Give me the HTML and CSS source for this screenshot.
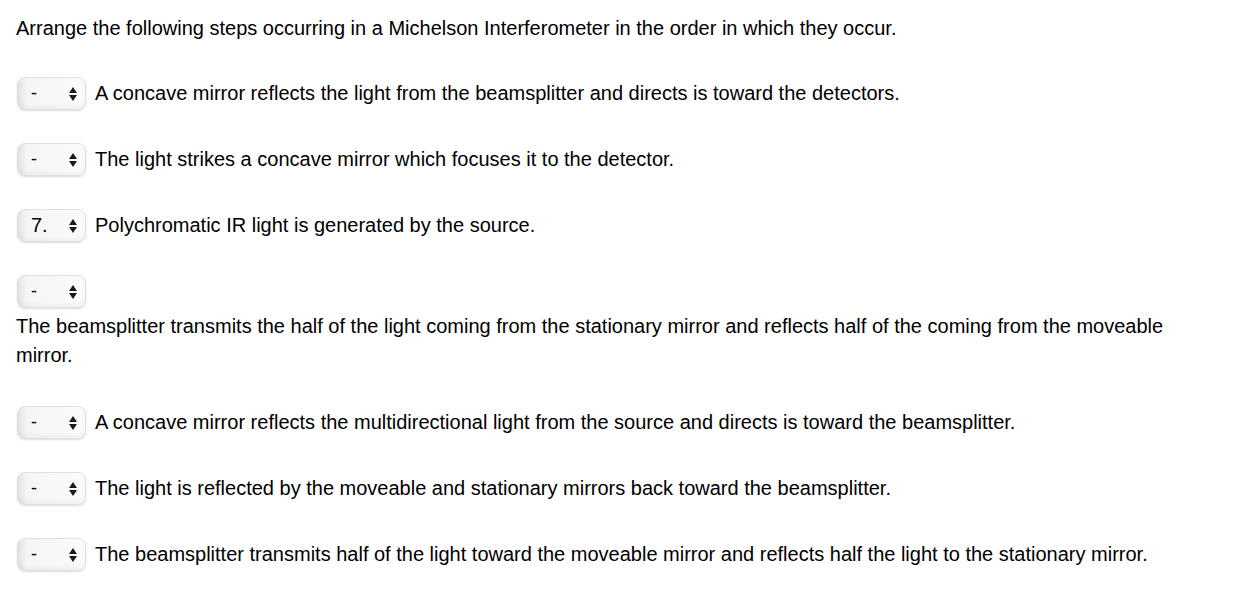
FILE: index.html
```html
<!DOCTYPE html>
<html lang="en">
<head>
    <meta charset="UTF-8">
    <title>Michelson Interferometer - Ordering</title>
    <link rel="stylesheet" href="styles.css">
</head>
<body>
    <div class="question">
        <p class="prompt">Arrange the following steps occurring in a Michelson Interferometer in the order in which they occur.</p>

        <div class="step">
            <div class="picker"><span class="value">-</span><svg class="arrows" width="8" height="14" viewBox="0 0 8 14"><path d="M4 0 L8 6 L0 6 Z M0 8 L8 8 L4 14 Z" fill="#1a1a1a"/></svg></div>
            <span class="label">A concave mirror reflects the light from the beamsplitter and directs is toward the detectors.</span>
        </div>

        <div class="step">
            <div class="picker"><span class="value">-</span><svg class="arrows" width="8" height="14" viewBox="0 0 8 14"><path d="M4 0 L8 6 L0 6 Z M0 8 L8 8 L4 14 Z" fill="#1a1a1a"/></svg></div>
            <span class="label">The light strikes a concave mirror which focuses it to the detector.</span>
        </div>

        <div class="step">
            <div class="picker"><span class="value big">7.</span><svg class="arrows" width="8" height="14" viewBox="0 0 8 14"><path d="M4 0 L8 6 L0 6 Z M0 8 L8 8 L4 14 Z" fill="#1a1a1a"/></svg></div>
            <span class="label">Polychromatic IR light is generated by the source.</span>
        </div>

        <div class="step wrapped">
            <div class="picker"><span class="value">-</span><svg class="arrows" width="8" height="14" viewBox="0 0 8 14"><path d="M4 0 L8 6 L0 6 Z M0 8 L8 8 L4 14 Z" fill="#1a1a1a"/></svg></div>
            <span class="label">The beamsplitter transmits the half of the light coming from the stationary mirror and reflects half of the coming from the moveable mirror.</span>
        </div>

        <div class="step">
            <div class="picker"><span class="value">-</span><svg class="arrows" width="8" height="14" viewBox="0 0 8 14"><path d="M4 0 L8 6 L0 6 Z M0 8 L8 8 L4 14 Z" fill="#1a1a1a"/></svg></div>
            <span class="label">A concave mirror reflects the multidirectional light from the source and directs is toward the beamsplitter.</span>
        </div>

        <div class="step">
            <div class="picker"><span class="value">-</span><svg class="arrows" width="8" height="14" viewBox="0 0 8 14"><path d="M4 0 L8 6 L0 6 Z M0 8 L8 8 L4 14 Z" fill="#1a1a1a"/></svg></div>
            <span class="label">The light is reflected by the moveable and stationary mirrors back toward the beamsplitter.</span>
        </div>

        <div class="step">
            <div class="picker"><span class="value">-</span><svg class="arrows" width="8" height="14" viewBox="0 0 8 14"><path d="M4 0 L8 6 L0 6 Z M0 8 L8 8 L4 14 Z" fill="#1a1a1a"/></svg></div>
            <span class="label">The beamsplitter transmits half of the light toward the moveable mirror and reflects half the light to the stationary mirror.</span>
        </div>
    </div>
</body>
</html>
```

FILE: styles.css
```css
body {
    margin: 0;
    padding: 14px 16px;
    font-family: "Liberation Sans", Arial, sans-serif;
    font-size: 20px;
    line-height: 29px;
    color: #000;
    background: #fff;
}
.question {
    width: 1200px;
}
.prompt {
    margin: 0 0 34px 0;
}
.step {
    display: flex;
    flex-wrap: wrap;
    align-items: center;
    column-gap: 9px;
    row-gap: 4px;
    margin-bottom: 33px;
}
.step.wrapped {
    margin-bottom: 36px;
}
.picker {
    display: flex;
    align-items: center;
    justify-content: space-between;
    box-sizing: border-box;
    width: 69px;
    height: 33px;
    margin-left: 1px;
    padding: 0 8px 0 13px;
    border: 1px solid #e0e0e0;
    border-radius: 8px;
    background: linear-gradient(to right, #e3e3e3 0px, #f5f5f5 9px, #fbfbfb 100%);
    box-shadow: 0 1px 2px rgba(0, 0, 0, 0.14), inset 0 -3px 4px rgba(0, 0, 0, 0.04);
}
.value {
    font-size: 18px;
}
.value.big {
    font-size: 20px;
}
.arrows {
    display: block;
}
.label {
    flex: 0 1 auto;
}
```
